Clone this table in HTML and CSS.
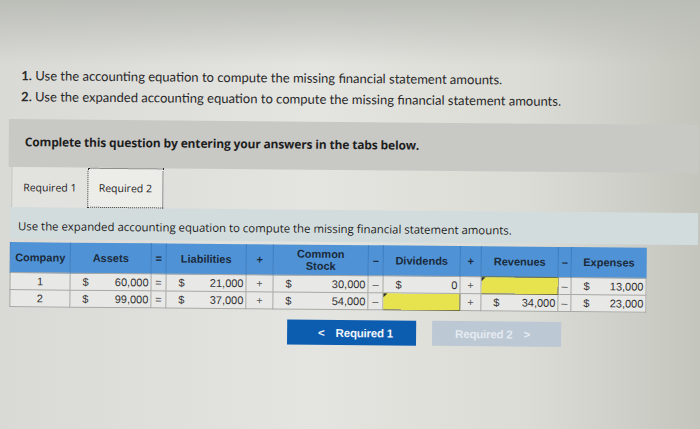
FILE: index.html
```html
<!DOCTYPE html>
<html>
<head>
<meta charset="utf-8">
<link rel="stylesheet" href="styles.css">
</head>
<body>
<div class="page">
  <ol class="instructions">
    <li><b>1.</b> Use the accounting equation to compute the missing financial statement amounts.</li>
    <li><b>2.</b> Use the expanded accounting equation to compute the missing financial statement amounts.</li>
  </ol>
  <div class="band">Complete this question by entering your answers in the tabs below.</div>
  <div class="tabs">
    <div class="tab">Required 1</div>
    <div class="tab active">Required 2</div>
  </div>
  <div class="prompt">Use the expanded accounting equation to compute the missing financial statement amounts.</div>
  <table class="eq">
    <colgroup>
      <col style="width:60px"><col style="width:81px"><col style="width:15px"><col style="width:80px"><col style="width:27px"><col style="width:95px"><col style="width:15px"><col style="width:77px"><col style="width:21px"><col style="width:77px"><col style="width:13px"><col style="width:75px">
    </colgroup>
    <thead>
      <tr>
        <th>Company</th><th>Assets</th><th>=</th><th>Liabilities</th><th>+</th><th>Common<br>Stock</th><th>–</th><th>Dividends</th><th>+</th><th>Revenues</th><th>–</th><th>Expenses</th>
      </tr>
    </thead>
    <tbody>
      <tr>
        <td class="c">1</td>
        <td><div class="amt"><span>$</span><span>60,000</span></div></td>
        <td class="op">=</td>
        <td><div class="amt"><span>$</span><span>21,000</span></div></td>
        <td class="op">+</td>
        <td><div class="amt"><span>$</span><span>30,000</span></div></td>
        <td class="op">–</td>
        <td><div class="amt"><span>$</span><span>0</span></div></td>
        <td class="op">+</td>
        <td class="input"></td>
        <td class="op">–</td>
        <td><div class="amt"><span>$</span><span>13,000</span></div></td>
      </tr>
      <tr>
        <td class="c">2</td>
        <td><div class="amt"><span>$</span><span>99,000</span></div></td>
        <td class="op">=</td>
        <td><div class="amt"><span>$</span><span>37,000</span></div></td>
        <td class="op">+</td>
        <td><div class="amt"><span>$</span><span>54,000</span></div></td>
        <td class="op">–</td>
        <td class="input"></td>
        <td class="op">+</td>
        <td><div class="amt"><span>$</span><span>34,000</span></div></td>
        <td class="op">–</td>
        <td><div class="amt"><span>$</span><span>23,000</span></div></td>
      </tr>
    </tbody>
  </table>
  <div class="nav">
    <button class="btn prev"><span class="chev">&lt;</span> Required 1</button>
    <button class="btn next">Required 2 <span class="chev">&gt;</span></button>
  </div>
</div>
</body>
</html>
```

FILE: styles.css
```css
html, body {
  margin: 0;
  height: 100%;
}
body {
  width: 700px;
  height: 429px;
  overflow: hidden;
  background:
    linear-gradient(180deg, rgba(186,188,182,0.95) 0px, rgba(220,220,216,0) 65px),
    linear-gradient(90deg, #d9d9d6 0%, #e4e4e0 45%, #dcdcd6 75%, #c4c6be 100%);
  font-family: "Lato", "Liberation Sans", sans-serif;
}
.page {
  padding-top: 65px;
  transform: rotate(0.5deg);
  transform-origin: 0 0;
}
.instructions {
  list-style: none;
  margin: 0 0 0 22px;
  padding: 0;
  font-size: 13px;
  line-height: 21px;
  color: #2a2a2a;
}
.instructions b { font-weight: 700; }
.band {
  margin: 12px 0 0 10px;
  height: 48px;
  background: #c8c8c5;
  padding-left: 16px;
  font-family: "Open Sans", sans-serif;
  font-weight: 700;
  font-size: 12px;
  line-height: 46px;
  color: #1e1e1e;
  letter-spacing: -0.15px;
}
.tabs {
  display: flex;
  margin: 0 0 0 13px;
  height: 40px;
}
.tab {
  width: 76px;
  box-sizing: border-box;
  background: #e2e2df;
  font-family: "Open Sans", sans-serif;
  font-size: 10.5px;
  color: #222;
  display: flex;
  align-items: center;
  justify-content: center;
  border-left: 1px solid #c4c4c0;
}
.tab.active {
  background: #ecece9;
  border: 1px dotted #333;
}
.prompt {
  margin: 0 0 0 12px;
  height: 32px;
  background: #d3dcdd;
  padding-left: 8px;
  font-family: "Open Sans", sans-serif;
  font-size: 11.4px;
  line-height: 38px;
  color: #1e1e1e;
}
.eq {
  margin: 3px 0 0 12px;
  border-collapse: collapse;
  table-layout: fixed;
  width: 636px;
  font-family: "Liberation Sans", Arial, sans-serif;
  font-size: 11px;
  color: #333;
}
.eq th {
  background: #4f93d6;
  color: #1b2a3b;
  font-weight: 700;
  height: 30px;
  padding: 0;
  line-height: 12px;
  border-left: 1px solid #3a7bc0;
  text-align: center;
}
.eq td {
  height: 16px;
  padding: 0 2px;
  background: #e8e8e6;
  border: 1px solid #a9a9a6;
  line-height: 16px;
}
.eq td.c { text-align: center; }
.eq td.op { text-align: center; padding: 0; color: #555; }
.amt {
  display: flex;
  justify-content: space-between;
  padding-left: 10px;
}
.eq td.input {
  background: #e6e34f;
  border: 1px solid #6f6f3c;
  position: relative;
}
.eq td.input::before {
  content: "";
  position: absolute;
  left: 0;
  top: 0;
  border-top: 4px solid #333;
  border-right: 4px solid transparent;
}
.nav {
  display: flex;
  gap: 16px;
  margin: 10px 0 0 290px;
}
.btn {
  width: 129px;
  height: 25px;
  border: 0;
  font-family: "Liberation Sans", Arial, sans-serif;
  font-weight: 700;
  font-size: 11.5px;
  letter-spacing: -0.2px;
}
.btn.prev {
  background: #0c5cb0;
  color: #f2f6fb;
}
.btn.next {
  background: #bcc8d4;
  color: #e4eaf0;
}
.chev {
  display: inline-block;
  margin: 0 8px;
}
```
